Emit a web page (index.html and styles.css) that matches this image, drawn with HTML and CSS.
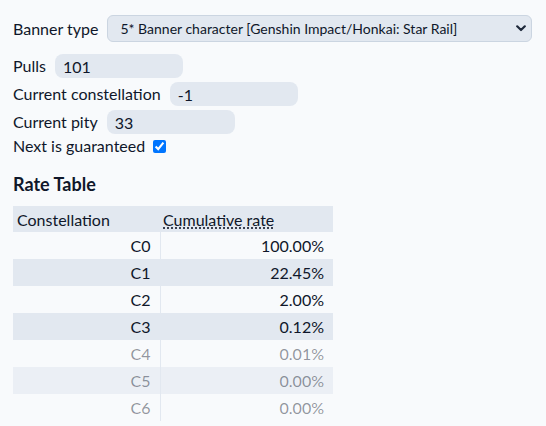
FILE: index.html
```html
<!DOCTYPE html>
<html lang="en">
<head>
<meta charset="utf-8">
<title>Rate Table</title>
<link rel="stylesheet" href="styles.css">
</head>
<body>
<main class="app">
  <div class="banner-row">
    <label class="label" for="banner">Banner type</label>
    <div class="select-wrap">
      <select id="banner" class="select">
        <option>5* Banner character [Genshin Impact/Honkai: Star Rail]</option>
      </select>
      <svg class="chevron" width="10" height="7" viewBox="0 0 10 7" aria-hidden="true"><path d="M1.2 1.3 L5 5 L8.8 1.3" fill="none" stroke="#1e293b" stroke-width="2.2" stroke-linecap="round" stroke-linejoin="round"/></svg>
    </div>
  </div>

  <div class="fields">
    <div class="field">
      <label class="label" for="pulls">Pulls</label>
      <input id="pulls" class="input" type="text" value="101">
    </div>
    <div class="field">
      <label class="label" for="cons">Current constellation</label>
      <input id="cons" class="input" type="text" value="-1">
    </div>
    <div class="field">
      <label class="label" for="pity">Current pity</label>
      <input id="pity" class="input" type="text" value="33">
    </div>
    <div class="check-row">
      <label class="label" for="guar">Next is guaranteed</label>
      <input id="guar" class="checkbox" type="checkbox" checked>
    </div>
  </div>

  <h3 class="heading">Rate Table</h3>

  <table class="rates">
    <thead>
      <tr>
        <th class="col-cons">Constellation</th>
        <th class="col-rate"><abbr title="Probability of reaching at least this constellation">Cumulative rate</abbr></th>
      </tr>
    </thead>
    <tbody>
      <tr><td class="c">C0</td><td class="r">100.00%</td></tr>
      <tr class="alt"><td class="c">C1</td><td class="r">22.45%</td></tr>
      <tr><td class="c">C2</td><td class="r">2.00%</td></tr>
      <tr class="alt"><td class="c">C3</td><td class="r">0.12%</td></tr>
      <tr class="dim"><td class="c">C4</td><td class="r">0.01%</td></tr>
      <tr class="alt dim"><td class="c">C5</td><td class="r">0.00%</td></tr>
      <tr class="dim"><td class="c">C6</td><td class="r">0.00%</td></tr>
    </tbody>
  </table>
</main>
</body>
</html>
```

FILE: styles.css
```css
html, body {
  margin: 0;
  padding: 0;
  background: #f8fafc;
}

body {
  font-family: "Lato", "Liberation Sans", sans-serif;
  font-size: 16px;
  color: #0f172a;
}

.app {
  padding: 15px 14px 0 13px;
}

.banner-row {
  display: flex;
  align-items: center;
  gap: 9px;
}

.label {
  line-height: 20px;
  white-space: nowrap;
}

.select-wrap {
  position: relative;
  flex: 1;
  display: flex;
}

.select {
  appearance: none;
  -webkit-appearance: none;
  flex: 1;
  height: 27px;
  margin: 0;
  padding: 0 30px 0 12px;
  border: 1px solid #cbd5e1;
  border-radius: 6px;
  background: #e2e8f0;
  font-family: inherit;
  font-size: 14px;
  color: #0f172a;
}

.chevron {
  position: absolute;
  right: 6px;
  top: 10px;
}

.fields {
  margin-top: 10px;
  display: flex;
  flex-direction: column;
}

.field {
  display: flex;
  align-items: center;
  height: 28px;
  gap: 9px;
}

.input {
  box-sizing: border-box;
  width: 128px;
  height: 24px;
  margin: 0;
  padding: 0 8px;
  border: none;
  border-radius: 8px;
  background: #e2e8f0;
  font-family: inherit;
  font-size: 16px;
  color: #0f172a;
  outline: none;
}

.check-row {
  display: flex;
  align-items: center;
  gap: 8px;
  height: 20px;
}

.checkbox {
  width: 13px;
  height: 13px;
  margin: 0;
}

.heading {
  margin: 17px 0 11px;
  font-size: 18px;
  line-height: 22px;
  font-weight: 700;
}

.rates {
  border-collapse: collapse;
  width: 320px;
  font-size: 16px;
}

.rates th {
  height: 26px;
  padding: 0 4px 0 4px;
  background: #e2e8f0;
  font-weight: 400;
  text-align: left;
}

.rates th.col-cons {
  width: 139px;
}

.rates th.col-rate {
  padding-left: 3px;
}

.rates abbr {
  text-decoration: underline dotted;
  text-underline-offset: 2px;
}

.rates td {
  height: 27px;
  padding: 0 9px 0 4px;
  text-align: right;
}

.rates td.c {
  border-right: 1px solid #e2e8f0;
}

.rates tr.alt td {
  background: #e2e8f0;
}

.rates tr.dim td {
  color: rgba(15, 23, 42, 0.45);
}

.rates tr.dim.alt td {
  background: #ebeff5;
}
```
